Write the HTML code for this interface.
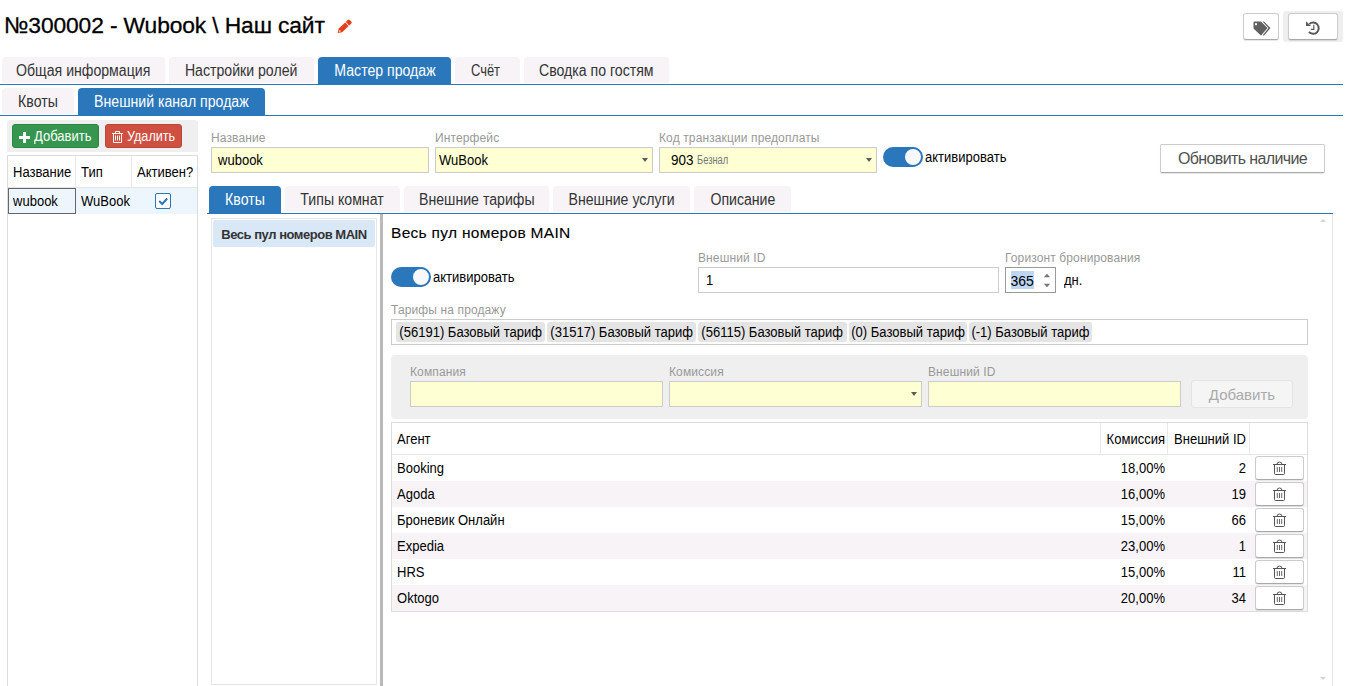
<!DOCTYPE html>
<html lang="ru">
<head>
<meta charset="utf-8">
<title>№300002 - Wubook \ Наш сайт</title>
<style>
*{box-sizing:border-box;margin:0;padding:0}
html,body{width:1348px;height:686px;overflow:hidden;background:#fff}
body{font-family:"Liberation Sans",sans-serif;color:#000;position:relative;font-size:13px}
.abs{position:absolute}
.title{left:4px;top:10px;font-size:22.8px;line-height:30px;white-space:nowrap;letter-spacing:-.12px;-webkit-text-stroke:.3px #000}
.tab{position:absolute;height:26px;background:#f7f3f7;border-radius:4px 4px 0 0;text-align:center;font-size:15.6px;line-height:28px;color:#333;white-space:nowrap}
.tab span{display:inline-block;transform:scaleX(.905)}
.tab.on{background:#2b77bb;color:#fff;height:27px}
.hline{position:absolute;height:1px;background:#2b77bb}
.lbl{position:absolute;font-size:12px;color:#999;white-space:nowrap;line-height:14px;letter-spacing:.12px}
.inp{position:absolute;height:26px;border:1px solid #ccc;background:#ffffd4;font-size:14px;line-height:24px;padding-left:6px;white-space:nowrap}
.inp.w{background:#fff}
.arrow{position:absolute;width:0;height:0;border-left:3px solid transparent;border-right:3px solid transparent;border-top:4px solid #5c5c5c}
.btn{position:absolute;border:1px solid #ccc;border-radius:3px;background:#fff;border-bottom-color:#a9a9a9;box-shadow:0 1px 1px rgba(0,0,0,.1);text-align:center;white-space:nowrap}
.tog{position:absolute;width:39px;height:20px;border-radius:10px;background:#2b77bb}
.tog i{position:absolute;right:-.5px;top:0;width:20px;height:20px;border-radius:50%;background:#f6f8fc;border:2px solid #2b77bb}
.txt{position:absolute;white-space:nowrap;font-size:14px;line-height:16px;margin-top:-1px;transform:scaleX(.93);transform-origin:0 50%}
.chip{display:flex;justify-content:center;position:absolute;top:2px;height:20px;background:#e4e4e4;border-radius:3px;font-size:14px;line-height:21px;text-align:center;white-space:nowrap}
.chip span{display:inline-block;transform:scaleX(.93)}
.cbtn{border-radius:3px;color:#fff;font-size:14px;line-height:22px;white-space:nowrap}
.s{display:inline-block;transform:scaleX(.93);transform-origin:0 50%}
.txt.r{text-align:right;transform-origin:100% 50%}
</style>
</head>
<body>
<div class="abs title">№300002 - Wubook \ Наш сайт</div>
<svg class="abs" style="left:337px;top:19px" width="16" height="15" viewBox="0 0 16 15"><g transform="translate(.7 14) rotate(-43.5)" fill="#e53f1e"><path d="M0 0L3.800-2.500h8.900v5h-8.900z"/><path d="M13.500-2.500h2.700q1.500 0 1.500 1.400v2.200q0 1.400-1.500 1.400h-2.700z"/><circle cx="2.900" cy="0" r=".8" fill="#fff"/></g></svg>

<!-- top-right buttons -->
<div class="btn" style="left:1243px;top:13px;width:36px;height:27px"><svg width="18" height="15" viewBox="0 0 18 15" style="position:absolute;left:9px;top:7px"><path d="M9.500 0.500h1.500l6.500 6.500-6.500 7.500h-1.500l6-7.500z" fill="#606060"/><path d="M0.500 1.500q0-1 1-1h6.500l6.500 6.500-6 7q-.6.500-1.200 0l-6.800-6.500zM3 2a1.100 1.100 0 1 0 .01 0z" fill="#606060" fill-rule="evenodd"/></svg></div>
<div class="abs" style="left:1283px;top:11px;width:60px;height:31px;background:#efefef;border-radius:3px"></div>
<div class="btn" style="left:1288px;top:13px;width:50px;height:27px"><svg width="15" height="15" viewBox="0 0 15 15" style="position:absolute;left:17px;top:7px"><path d="M3.300 3.100A5.600 5.600 0 1 1 2.900 10.900" fill="none" stroke="#5a5a5a" stroke-width="2"/><path d="M0 .2v4.900h4.900z" fill="#5a5a5a"/><path d="M7.800 3.800v4.500h-3" fill="none" stroke="#5a5a5a" stroke-width="1.200"/></svg></div>

<!-- main tabs -->
<div class="tab" style="left:2px;top:57px;width:163px"><span>Общая информация</span></div>
<div class="tab" style="left:169px;top:57px;width:145px"><span>Настройки ролей</span></div>
<div class="tab on" style="left:318px;top:57px;width:133px"><span>Мастер продаж</span></div>
<div class="tab" style="left:455px;top:57px;width:65px"><span style="transform:scaleX(.83);position:relative;left:-2px">Счёт</span></div>
<div class="tab" style="left:524px;top:57px;width:145px"><span>Сводка по гостям</span></div>
<div class="hline" style="left:0;top:84px;width:1343px"></div>

<!-- second-level tabs -->
<div class="tab" style="left:2px;top:88px;width:72px"><span>Квоты</span></div>
<div class="tab on" style="left:78px;top:88px;width:187px"><span>Внешний канал продаж</span></div>
<div class="hline" style="left:0;top:115px;width:1343px"></div>


<!-- left panel -->
<div class="abs" style="left:7px;top:120px;width:191px;height:32px;background:#efefef;border-radius:3px 3px 0 0"></div>
<div class="abs cbtn" style="left:12px;top:124px;width:87px;height:24px;background:#36964f;border:1px solid #2e8444"><svg width="11" height="11" viewBox="0 0 11 11" style="position:absolute;left:6px;top:7px"><path d="M4 0h3v4h4v3H7v4H4V7H0V4h4z" fill="#fff"/></svg><span class="s" style="position:absolute;left:21px;top:0">Добавить</span></div>
<div class="abs cbtn" style="left:105px;top:124px;width:77px;height:24px;background:#cf4f40;border:1px solid #bb4538"><svg width="11" height="12" viewBox="0 0 11 12" style="position:absolute;left:6px;top:6px" fill="none" stroke="#fff" stroke-width="1"><path d="M0 2.500h11M3.500 2.500v-2h4v2M1.500 2.500v9h8v-9M3.500 4.500v5M5.500 4.500v5M7.500 4.500v5"/></svg><span class="s" style="position:absolute;left:21px;top:0;transform:scaleX(.9)">Удалить</span></div>

<div class="abs" style="left:7px;top:155px;width:191px;height:540px;border:1px solid #ddd;background:#fff"></div>
<div class="abs" style="left:8px;top:187px;width:189px;height:1px;background:#e4e4e4"></div>
<div class="abs" style="left:75px;top:156px;width:1px;height:31px;background:#e9e9e9"></div>
<div class="abs" style="left:131px;top:156px;width:1px;height:31px;background:#e9e9e9"></div>
<div class="txt" style="left:13px;top:165px">Название</div>
<div class="txt" style="left:81px;top:165px">Тип</div>
<div class="txt" style="left:137px;top:165px">Активен?</div>
<div class="abs" style="left:8px;top:188px;width:189px;height:26px;background:#eef6fd"></div>
<div class="abs" style="left:8px;top:188px;width:68px;height:26px;border:1px solid #666"></div>
<div class="txt" style="left:13px;top:194px">wubook</div>
<div class="txt" style="left:81px;top:194px">WuBook</div>
<div class="abs" style="left:155px;top:193px;width:16px;height:16px;border:1px solid #2b77bb;border-radius:2px;background:#fff"><svg width="14" height="14" viewBox="0 0 14 14" style="position:absolute;left:0;top:0"><path d="M3.200 7l3 3 5-5.500" fill="none" stroke="#2b77bb" stroke-width="2"/></svg></div>

<!-- channel form -->
<div class="lbl" style="left:211px;top:131px">Название</div>
<div class="inp" style="left:211px;top:147px;width:218px"><span class="s">wubook</span></div>
<div class="lbl" style="left:435px;top:131px">Интерфейс</div>
<div class="inp" style="left:435px;top:147px;width:218px;padding-left:3px"><span class="s">WuBook</span></div>
<div class="arrow" style="left:642px;top:158px"></div>
<div class="lbl" style="left:659px;top:131px">Код транзакции предоплаты</div>
<div class="inp" style="left:659px;top:147px;width:218px;padding-left:11px"><span class="s" style="transform:scaleX(.96)">903</span><span style="font-size:12px;color:#777;display:inline-block;transform:scaleX(.78);transform-origin:0 50%;margin-left:3px;letter-spacing:0;position:relative;top:-1px">Безнал</span></div>
<div class="arrow" style="left:866px;top:158px"></div>
<div class="tog" style="left:883px;top:147px"><i></i></div>
<div class="txt" style="left:925px;top:150px">активировать</div>
<div class="btn" style="left:1160px;top:144px;width:165px;height:29px;font-size:16px;line-height:27px;color:#505050;letter-spacing:-.63px;border-radius:2px">Обновить наличие</div>

<!-- inner tabs -->
<div class="tab on" style="left:209px;top:186px;width:72px"><span>Квоты</span></div>
<div class="tab" style="left:285px;top:186px;width:115px"><span>Типы комнат</span></div>
<div class="tab" style="left:404px;top:186px;width:145px"><span>Внешние тарифы</span></div>
<div class="tab" style="left:553px;top:186px;width:137px"><span>Внешние услуги</span></div>
<div class="tab" style="left:694px;top:186px;width:97px"><span>Описание</span></div>
<div class="hline" style="left:207px;top:213px;width:1126px"></div>
<div class="abs" style="left:1332px;top:214px;width:1px;height:472px;background:#e6e6e6"></div>

<!-- list -->
<div class="abs" style="left:211px;top:218px;width:166px;height:467px;border:1px solid #e6e6e6;background:#fff"></div>
<div class="abs" style="left:213px;top:220px;width:162px;height:27px;background:#d9e8f7;border-radius:2px;font-weight:bold;font-size:13px;line-height:29px;color:#333;text-align:center;white-space:nowrap;letter-spacing:-.47px">Весь пул номеров MAIN</div>
<div class="abs" style="left:380px;top:214px;width:3px;height:472px;background:#b9b9b9"></div>

<!-- details -->
<div class="abs" style="left:391px;top:222.500px;font-size:15.500px;line-height:20px;white-space:nowrap;letter-spacing:.3px;-webkit-text-stroke:.12px #000">Весь пул номеров MAIN</div>
<div class="tog" style="left:391px;top:267px"><i></i></div>
<div class="txt" style="left:433px;top:270px">активировать</div>
<div class="lbl" style="left:698px;top:251px">Внешний ID</div>
<div class="inp w" style="left:698px;top:267px;width:301px;padding-left:7px"><span class="s">1</span></div>
<div class="lbl" style="left:1005px;top:251px">Горизонт бронирования</div>
<div class="inp w" style="left:1005px;top:267px;width:51px;border-color:#999;padding-left:4px;font-size:14px;line-height:17px"><span style="background:#bdd6f1;display:inline-block;margin-top:3px;height:18px;line-height:20px;margin-left:.5px">365</span></div>
<svg class="abs" style="left:1043px;top:273px" width="8" height="15" viewBox="0 0 8 15"><path d="M.8 4.200l3.200-3.400 3.200 3.400zM.8 10.800l3.200 3.400 3.200-3.400z" fill="#777"/></svg>
<div class="txt" style="left:1064px;top:273px">дн.</div>

<div class="lbl" style="left:391px;top:303px">Тарифы на продажу</div>
<div class="abs" style="left:391px;top:319px;width:917px;height:26px;border:1px solid #ccc;background:#fff">
<div class="chip" style="left:4px;width:149px"><span>(56191) Базовый тариф</span></div>
<div class="chip" style="left:155px;width:149px"><span>(31517) Базовый тариф</span></div>
<div class="chip" style="left:306px;width:149px"><span>(56115) Базовый тариф</span></div>
<div class="chip" style="left:457px;width:118px"><span>(0) Базовый тариф</span></div>
<div class="chip" style="left:577px;width:123px"><span>(-1) Базовый тариф</span></div>
</div>

<div class="abs" style="left:391px;top:355px;width:917px;height:64px;background:#efefef;border-radius:4px"></div>
<div class="lbl" style="left:410px;top:365px">Компания</div>
<div class="inp" style="left:410px;top:381px;width:253px"></div>
<div class="lbl" style="left:669px;top:365px">Комиссия</div>
<div class="inp" style="left:669px;top:381px;width:253px"></div>
<div class="arrow" style="left:911px;top:392px"></div>
<div class="lbl" style="left:928px;top:365px">Внешний ID</div>
<div class="inp" style="left:928px;top:381px;width:253px"></div>
<div class="btn" style="left:1191px;top:380px;width:102px;height:28px;font-size:15px;line-height:27px;color:#aaa;background:#f5f5f5;border-color:#e4e4e4;box-shadow:none">Добавить</div>

<!-- agents grid -->
<div class="abs" style="left:391px;top:422px;width:917px;height:190px;border:1px solid #ddd;background:#fff"></div>
<div class="abs" style="left:392px;top:454px;width:915px;height:1px;background:#e6e6e6"></div>
<div class="abs" style="left:1100px;top:423px;width:1px;height:31px;background:#e9e9e9"></div>
<div class="abs" style="left:1167px;top:423px;width:1px;height:31px;background:#e9e9e9"></div>
<div class="abs" style="left:1249px;top:423px;width:1px;height:31px;background:#e9e9e9"></div>
<div class="txt" style="left:397px;top:432px">Агент</div>
<div class="txt r" style="left:1101px;width:64px;top:432px">Комиссия</div>
<div class="txt r" style="left:1168px;width:78px;top:432px">Внешний ID</div>
<div class="txt" style="left:397px;top:461px">Booking</div><div class="txt r" style="left:1101px;width:64px;top:461px">18,00%</div><div class="txt r" style="left:1168px;width:78px;top:461px">2</div>
<div class="btn" style="left:1255px;top:456px;width:49px;height:24px"><svg width="13" height="14" viewBox="0 0 13 14" style="position:absolute;left:17px;top:4px" fill="none" stroke="#555" stroke-width="1"><path d="M0 3.500h13M4 3.500q0-2.500 2.500-2.500t2.500 2.500M1.500 3.500v9q0 1 1 1h8q1 0 1-1v-9"/><path d="M4.300 6v5M6.500 6v5M8.700 6v5" stroke-width=".9"/></svg></div>
<div class="abs" style="left:392px;top:481px;width:915px;height:26px;background:#f7f3f7"></div>
<div class="txt" style="left:397px;top:487px">Agoda</div><div class="txt r" style="left:1101px;width:64px;top:487px">16,00%</div><div class="txt r" style="left:1168px;width:78px;top:487px">19</div>
<div class="btn" style="left:1255px;top:482px;width:49px;height:24px"><svg width="13" height="14" viewBox="0 0 13 14" style="position:absolute;left:17px;top:4px" fill="none" stroke="#555" stroke-width="1"><path d="M0 3.500h13M4 3.500q0-2.500 2.500-2.500t2.500 2.500M1.500 3.500v9q0 1 1 1h8q1 0 1-1v-9"/><path d="M4.300 6v5M6.500 6v5M8.700 6v5" stroke-width=".9"/></svg></div>
<div class="txt" style="left:397px;top:513px">Броневик Онлайн</div><div class="txt r" style="left:1101px;width:64px;top:513px">15,00%</div><div class="txt r" style="left:1168px;width:78px;top:513px">66</div>
<div class="btn" style="left:1255px;top:508px;width:49px;height:24px"><svg width="13" height="14" viewBox="0 0 13 14" style="position:absolute;left:17px;top:4px" fill="none" stroke="#555" stroke-width="1"><path d="M0 3.500h13M4 3.500q0-2.500 2.500-2.500t2.500 2.500M1.500 3.500v9q0 1 1 1h8q1 0 1-1v-9"/><path d="M4.300 6v5M6.500 6v5M8.700 6v5" stroke-width=".9"/></svg></div>
<div class="abs" style="left:392px;top:533px;width:915px;height:26px;background:#f7f3f7"></div>
<div class="txt" style="left:397px;top:539px">Expedia</div><div class="txt r" style="left:1101px;width:64px;top:539px">23,00%</div><div class="txt r" style="left:1168px;width:78px;top:539px">1</div>
<div class="btn" style="left:1255px;top:534px;width:49px;height:24px"><svg width="13" height="14" viewBox="0 0 13 14" style="position:absolute;left:17px;top:4px" fill="none" stroke="#555" stroke-width="1"><path d="M0 3.500h13M4 3.500q0-2.500 2.500-2.500t2.500 2.500M1.500 3.500v9q0 1 1 1h8q1 0 1-1v-9"/><path d="M4.300 6v5M6.500 6v5M8.700 6v5" stroke-width=".9"/></svg></div>
<div class="txt" style="left:397px;top:565px">HRS</div><div class="txt r" style="left:1101px;width:64px;top:565px">15,00%</div><div class="txt r" style="left:1168px;width:78px;top:565px">11</div>
<div class="btn" style="left:1255px;top:560px;width:49px;height:24px"><svg width="13" height="14" viewBox="0 0 13 14" style="position:absolute;left:17px;top:4px" fill="none" stroke="#555" stroke-width="1"><path d="M0 3.500h13M4 3.500q0-2.500 2.500-2.500t2.500 2.500M1.500 3.500v9q0 1 1 1h8q1 0 1-1v-9"/><path d="M4.300 6v5M6.500 6v5M8.700 6v5" stroke-width=".9"/></svg></div>
<div class="abs" style="left:392px;top:585px;width:915px;height:26px;background:#f7f3f7"></div>
<div class="txt" style="left:397px;top:591px">Oktogo</div><div class="txt r" style="left:1101px;width:64px;top:591px">20,00%</div><div class="txt r" style="left:1168px;width:78px;top:591px">34</div>
<div class="btn" style="left:1255px;top:586px;width:49px;height:24px"><svg width="13" height="14" viewBox="0 0 13 14" style="position:absolute;left:17px;top:4px" fill="none" stroke="#555" stroke-width="1"><path d="M0 3.500h13M4 3.500q0-2.500 2.500-2.500t2.500 2.500M1.500 3.500v9q0 1 1 1h8q1 0 1-1v-9"/><path d="M4.300 6v5M6.500 6v5M8.700 6v5" stroke-width=".9"/></svg></div>

<div class="abs" style="left:1320px;top:219px;width:0;height:0;border-left:3.5px solid transparent;border-right:3.5px solid transparent;border-bottom:3.5px solid #d4d4d4"></div>
<div class="abs" style="left:1320px;top:677px;width:0;height:0;border-left:3.5px solid transparent;border-right:3.5px solid transparent;border-top:3.5px solid #d4d4d4"></div>
</body>
</html>
